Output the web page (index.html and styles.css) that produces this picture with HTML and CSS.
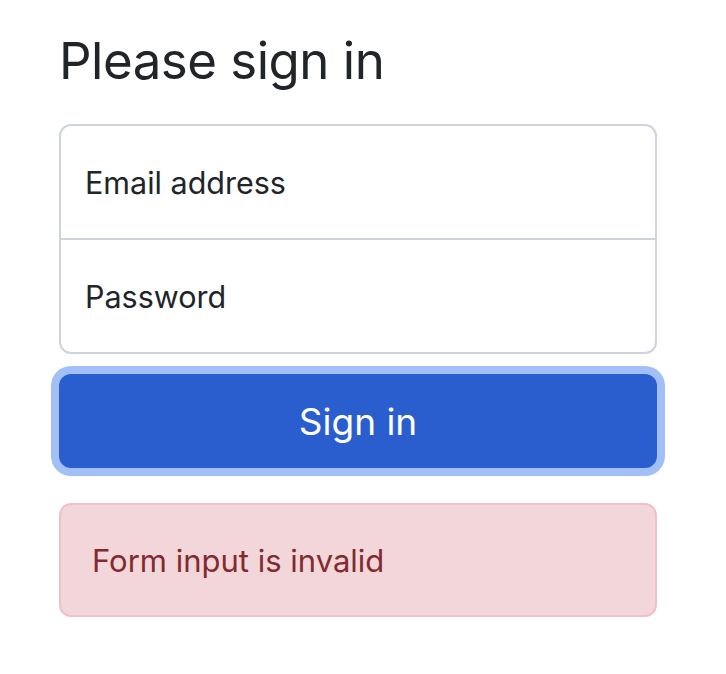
FILE: index.html
```html
<!DOCTYPE html>
<html lang="en">
<head>
<meta charset="utf-8">
<title>Please sign in</title>
<link rel="stylesheet" href="styles.css">
</head>
<body>
<main class="signin">
  <h1 class="title">Please sign in</h1>
  <div class="fields">
    <div class="field"><span class="label">Email address</span></div>
    <div class="divider"></div>
    <div class="field"><span class="label">Password</span></div>
  </div>
  <button class="btn" type="button">Sign in</button>
  <div class="alert">Form input is invalid</div>
</main>
</body>
</html>
```
FILE: styles.css
```css
html, body {
  margin: 0;
  padding: 0;
  background: #ffffff;
}
body {
  font-family: Inter, "Liberation Sans", Arial, sans-serif;
  color: #212529;
}
.signin {
  width: 598px;
  padding: 27px 0 0 59px;
  display: flex;
  flex-direction: column;
}
.title {
  margin: 0 0 30px 0;
  font-size: 51px;
  line-height: 67px;
  font-weight: 400;
  letter-spacing: -0.5px;
  color: #212529;
}
.fields {
  border: 2px solid #ced4da;
  border-radius: 12px;
  display: flex;
  flex-direction: column;
}
.field {
  height: 112px;
  display: flex;
  align-items: center;
  padding-left: 24px;
}
.label {
  font-size: 30.5px;
  color: #212529;
}
.divider {
  height: 2px;
  background: #ced4da;
}
.btn {
  margin-top: 20px;
  height: 94px;
  border: none;
  border-radius: 12px;
  background: #2a5ecf;
  color: #ffffff;
  font-family: inherit;
  font-size: 37px;
  box-shadow: 0 0 0 8px #a3bff7;
  padding: 0;
}
.alert {
  margin-top: 35px;
  height: 110px;
  border: 2px solid #efc0c5;
  border-radius: 12px;
  background: #f3d6d9;
  color: #822a2f;
  font-size: 31px;
  display: flex;
  align-items: center;
  padding-left: 31px;
}
```
